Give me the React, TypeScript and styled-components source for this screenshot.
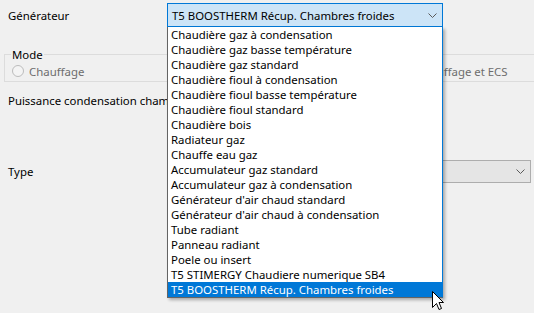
import React from 'react';
import styled, { createGlobalStyle } from 'styled-components';

const GlobalStyle = createGlobalStyle`
    body {
        margin: 0;
        background: #f0f0f0;
    }
`;

const generateurs = [
    "Chaudière gaz à condensation",
    "Chaudière gaz basse température",
    "Chaudière gaz standard",
    "Chaudière fioul à condensation",
    "Chaudière fioul basse température",
    "Chaudière fioul standard",
    "Chaudière bois",
    "Radiateur gaz",
    "Chauffe eau gaz",
    "Accumulateur gaz standard",
    "Accumulateur gaz à condensation",
    "Générateur d'air chaud standard",
    "Générateur d'air chaud à condensation",
    "Tube radiant",
    "Panneau radiant",
    "Poele ou insert",
    "T5 STIMERGY Chaudiere numerique SB4",
    "T5 BOOSTHERM Récup. Chambres froides",
];

const Window = styled.div`
    position: relative;
    width: 534px;
    height: 313px;
    overflow: hidden;
    background: #f0f0f0;
    font-family: "Noto Sans", "Liberation Sans", sans-serif;
    font-size: 11.4px;
    color: #000;
    display: flex;
    flex-direction: column;
`;

const FieldRow = styled.div<{ $top: number }>`
    display: grid;
    grid-template-columns: 159px 1fr;
    align-items: center;
    padding-left: 8px;
    margin-top: ${(p) => p.$top}px;
`;

// the popup list hides whatever passes x=167, so the label stops there
const Label = styled.div<{ $clip?: boolean }>`
    line-height: 15px;
    white-space: nowrap;
    overflow: ${(p) => (p.$clip ? 'hidden' : 'visible')};
`;

const Combo = styled.div<{ $active?: boolean; $width?: number }>`
    box-sizing: border-box;
    height: ${(p) => (p.$active ? 24 : 23)}px;
    width: ${(p) => (p.$width ? `${p.$width}px` : 'auto')};
    margin-right: ${(p) => (p.$width ? 0 : 3)}px;
    display: flex;
    align-items: center;
    justify-content: space-between;
    padding: 0 5px 0 4px;
    background: ${(p) => (p.$active ? '#cce4f7' : '#e5e5e5')};
    border: 1px solid ${(p) => (p.$active ? '#0078d7' : '#adadad')};
`;

const Chevron = () => (
    <svg width="9" height="5" viewBox="0 0 9 5">
        <path d="M0.5 0.5 L4.5 4.5 L8.5 0.5" fill="none" stroke="#5a5a5a" strokeWidth="1" />
    </svg>
);

const Group = styled.fieldset`
    margin: 20px -10px 0 4px;
    padding: 1px 7px 2px 7px;
    border: 1px solid #dcdcdc;
    min-width: 0;
`;

const Legend = styled.legend`
    padding: 0 1px;
    margin-left: -1px;
    line-height: 15px;
`;

const RadioRow = styled.div`
    display: grid;
    grid-template-columns: 387px auto;
    height: 16px;
    align-items: center;
`;

const RadioOption = styled.div`
    display: flex;
    align-items: center;
    gap: 5px;
    color: #6d6d6d;
    white-space: nowrap;
`;

const RadioCircle = styled.span`
    box-sizing: border-box;
    width: 12px;
    height: 12px;
    border-radius: 50%;
    border: 1px solid #bcbcbc;
    background: #f4f4f4;
`;

const DropList = styled.ul`
    position: absolute;
    left: 167px;
    top: 27px;
    width: 276px;
    box-sizing: border-box;
    margin: 0;
    padding: 0;
    list-style: none;
    background: #fff;
    border: 1px solid #646464;
    border-top: none;
    border-right: 1px solid #0078d7;
    box-shadow: 2px 2px 3px rgba(0, 0, 0, 0.3);
`;

const DropItem = styled.li<{ $selected?: boolean }>`
    height: 15px;
    line-height: 15px;
    padding-left: 3px;
    white-space: nowrap;
    background: ${(p) => (p.$selected ? '#0078d7' : 'transparent')};
    color: ${(p) => (p.$selected ? '#fff' : '#000')};
`;

const Cursor = styled.svg`
    position: absolute;
    left: 432px;
    top: 291px;
`;

const App = () => {
    const selected = generateurs[generateurs.length - 1];

    return (
        <>
            <GlobalStyle />
            <Window>
                <FieldRow $top={3}>
                    <Label>Générateur</Label>
                    <Combo $active $width={276}>
                        <span>{selected}</span>
                        <Chevron />
                    </Combo>
                </FieldRow>

                <Group>
                    <Legend>Mode</Legend>
                    <RadioRow>
                        <RadioOption>
                            <RadioCircle />
                            Chauffage
                        </RadioOption>
                        <RadioOption>
                            <RadioCircle />
                            Chauffage et ECS
                        </RadioOption>
                    </RadioRow>
                </Group>

                <FieldRow $top={11}>
                    <Label $clip>Puissance condensation chambres froides</Label>
                </FieldRow>

                <FieldRow $top={52}>
                    <Label>Type</Label>
                    <Combo>
                        <span />
                        <Chevron />
                    </Combo>
                </FieldRow>

                <DropList>
                    {generateurs.map((g) => (
                        <DropItem key={g} $selected={g === selected}>{g}</DropItem>
                    ))}
                </DropList>

                <Cursor width="13" height="21" viewBox="0 0 13 21">
                    <path d="M0.5 0.5 L0.5 16.5 L4.5 12.5 L7 18.5 L9.5 17.5 L7 11.5 L11.5 11.5 Z" fill="#fff" stroke="#000" strokeWidth="1" strokeLinejoin="miter" />
                </Cursor>
            </Window>
        </>
    );
};

export default App;
